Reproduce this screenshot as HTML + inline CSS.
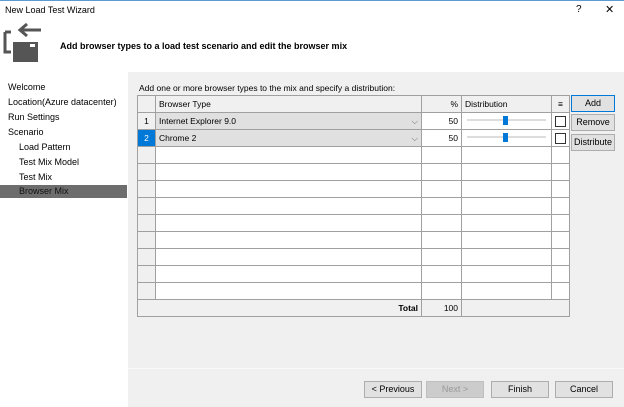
<!DOCTYPE html><html><head><style>
body{margin:0;width:624px;height:407px;background:#fff;font-family:"Liberation Sans",sans-serif;font-size:9px;color:#000;position:relative;overflow:hidden}
.a{position:absolute;white-space:nowrap}
.btn{position:absolute;background:#e1e1e1;border:1px solid #adadad;box-sizing:border-box;text-align:center;font-size:9px;line-height:15px}
table{border-collapse:collapse;position:absolute;left:137px;top:95px;background:#fff}
td{border:1px solid #a0a0a0;height:17px;padding:0 3px;font-size:8.5px;box-sizing:border-box}
</style></head><body>
<div style="position:absolute;left:0;top:0;width:624px;height:1px;background:#5b9bd5"></div>
<div class="a" style="left:5px;top:5px;font-size:9px">New Load Test Wizard</div>
<div class="a" style="left:576px;top:4px;font-size:10px">?</div>
<div class="a" style="left:605px;top:3px;font-size:11px">✕</div>
<svg class="a" style="left:3px;top:22px" width="40" height="42"><path d="M2 10v20h6M2 10h6" stroke="#555" stroke-width="3" fill="none"/><rect x="10" y="20" width="25" height="20" fill="#555"/><rect x="27" y="22" width="5" height="3" fill="#fff"/><path d="M38 8H18M24 2l-7 6 7 6" stroke="#555" stroke-width="3" fill="none"/></svg>
<div class="a" style="left:60px;top:41px;font-weight:bold;font-size:9px">Add browser types to a load test scenario and edit the browser mix</div>
<div class="a" style="left:8px;top:80px;line-height:15px">Welcome<br>Location(Azure datacenter)<br>Run Settings<br>Scenario</div>
<div class="a" style="left:19px;top:140px;line-height:15px">Load Pattern<br>Test Mix Model<br>Test Mix</div>
<div class="a" style="left:0;top:185px;width:127px;height:13px;background:#6d6d6d"></div>
<div class="a" style="left:19px;top:186px;color:#111">Browser Mix</div>
<div class="a" style="left:128px;top:72px;width:496px;height:335px;background:#f0f0f0"></div>
<div class="a" style="left:128px;top:368px;width:496px;height:1px;background:#fafafa"></div>
<div class="a" style="left:139px;top:83px;font-size:8.5px">Add one or more browser types to the mix and specify a distribution:</div>
<table>
<tr style="background:#f0f0f0"><td style="width:18px"></td><td style="width:266px">Browser Type</td><td style="width:40px;text-align:right">%</td><td style="width:90px">Distribution</td><td style="width:16px;text-align:center">≡</td></tr>
<tr><td style="background:#f0f0f0;text-align:center">1</td><td style="background:#e0e0e0">Internet Explorer 9.0<span style="float:right;color:#666">⌵</span></td><td style="text-align:right">50</td><td><div style="position:relative;height:12px"><div style="position:absolute;left:2px;right:2px;top:4px;height:2px;background:#ddd"></div><div style="position:absolute;left:38px;top:1px;width:5px;height:9px;background:#0078d7"></div></div></td><td><div style="width:9px;height:9px;border:1px solid #333;background:#fff"></div></td></tr>
<tr><td style="background:#0078d7;color:#fff;text-align:center">2</td><td style="background:#e0e0e0">Chrome 2<span style="float:right;color:#666">⌵</span></td><td style="text-align:right">50</td><td><div style="position:relative;height:12px"><div style="position:absolute;left:2px;right:2px;top:4px;height:2px;background:#ddd"></div><div style="position:absolute;left:38px;top:1px;width:5px;height:9px;background:#0078d7"></div></div></td><td><div style="width:9px;height:9px;border:1px solid #333;background:#fff"></div></td></tr>
<tr><td style="background:#f0f0f0"></td><td></td><td></td><td></td><td></td></tr>
<tr><td style="background:#f0f0f0"></td><td></td><td></td><td></td><td></td></tr>
<tr><td style="background:#f0f0f0"></td><td></td><td></td><td></td><td></td></tr>
<tr><td style="background:#f0f0f0"></td><td></td><td></td><td></td><td></td></tr>
<tr><td style="background:#f0f0f0"></td><td></td><td></td><td></td><td></td></tr>
<tr><td style="background:#f0f0f0"></td><td></td><td></td><td></td><td></td></tr>
<tr><td style="background:#f0f0f0"></td><td></td><td></td><td></td><td></td></tr>
<tr><td style="background:#f0f0f0"></td><td></td><td></td><td></td><td></td></tr>
<tr><td style="background:#f0f0f0"></td><td></td><td></td><td></td><td></td></tr>
<tr style="background:#f0f0f0"><td colspan="2" style="text-align:right;font-weight:bold">Total</td><td style="text-align:right">100</td><td colspan="2"></td></tr>
</table>
<div class="btn" style="left:571px;top:95px;width:44px;height:17px;border:1px solid #0078d7">Add</div>
<div class="btn" style="left:571px;top:114px;width:44px;height:17px">Remove</div>
<div class="btn" style="left:571px;top:134px;width:44px;height:17px">Distribute</div>
<div class="btn" style="left:364px;top:381px;width:58px;height:17px">&lt; Previous</div>
<div class="btn" style="left:426px;top:381px;width:58px;height:17px;color:#999;background:#ccc;border-color:#bfbfbf">Next &gt;</div>
<div class="btn" style="left:491px;top:381px;width:58px;height:17px">Finish</div>
<div class="btn" style="left:555px;top:381px;width:58px;height:17px">Cancel</div>
</body></html>
